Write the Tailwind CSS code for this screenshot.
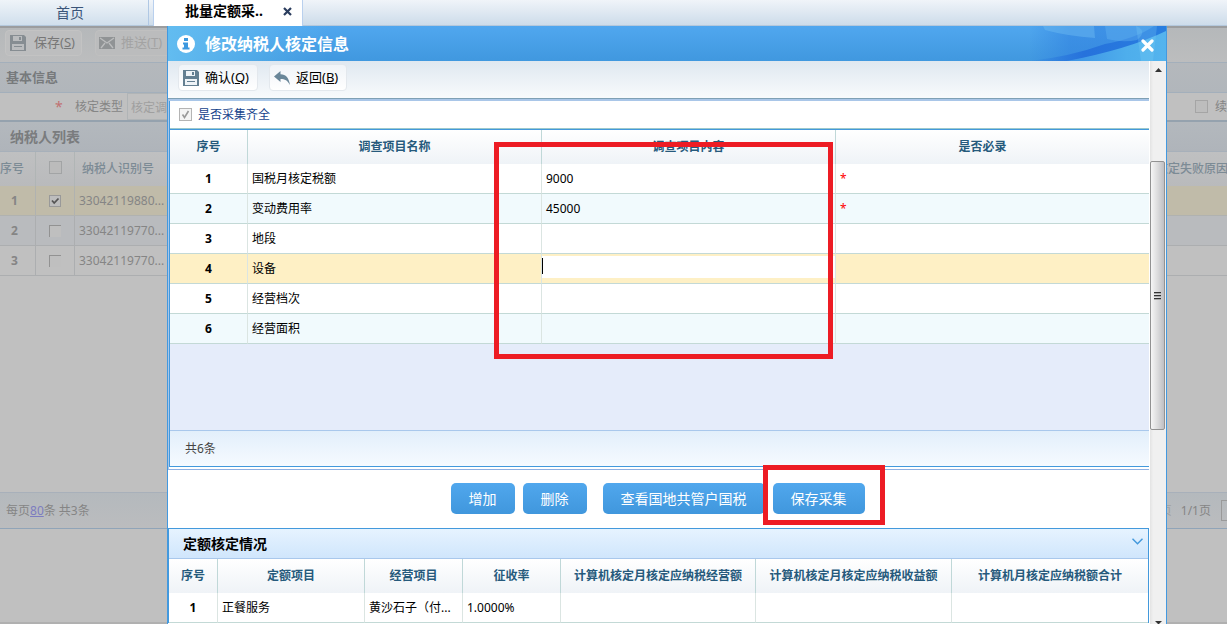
<!DOCTYPE html>
<html lang="zh-CN">
<head>
<meta charset="utf-8">
<title>批量定额采集</title>
<script src="https://cdn.jsdelivr.net/npm/@tailwindcss/browser@4"></script>
</head>
<body class="relative flex h-screen flex-col overflow-hidden bg-[#c0c0c0] font-['Noto_Sans','Noto_Sans_CJK_SC',sans-serif] text-xs text-black">

<!-- Tabs -->
<nav class="flex h-[26px] shrink-0 gap-1 border-b border-[#b4c8dc] bg-linear-to-b from-[#f0f4f9] to-[#cddcea]">
  <a href="#" class="flex w-[149px] items-center justify-center border-r border-[#b0c8e4] bg-linear-to-b from-[#eff4f9] to-[#d0dfec] pr-2 text-sm text-[#3a5478]">首页</a>
  <div class="flex h-[26px] w-[150px] items-center border-x border-[#b9d0ee] bg-white pb-1 pl-[31px]">
    <a href="#" class="w-[94px] text-sm font-bold">批量定额采..</a>
    <button aria-label="关闭" class="flex size-4 items-center justify-center">
      <svg class="size-[9px]" viewBox="0 0 9 9"><path d="M1 1l7 7M8 1L1 8" stroke="#2b3d5e" stroke-width="2.2"/></svg>
    </button>
  </div>
</nav>

<!-- Dimmed page -->
<main class="flex min-h-0 flex-1 flex-col overflow-hidden whitespace-nowrap border-t-2 border-[#9b9d9f] text-[#858585]">
  <div class="flex h-[35px] shrink-0 items-center gap-[13px] border-b border-[#a3afbb] bg-linear-to-b from-[#b5b8ba] to-[#bcbdbe] px-[5px] pb-1">
    <button class="flex h-[26px] w-[77px] items-center gap-2 rounded-sm border border-[#c3c3c3] bg-[#bdbebf] px-1 text-[13px] text-[#777]">
      <svg class="size-4 shrink-0" viewBox="0 0 16 16"><path d="M0 0H14L16 2V16H0Z" fill="#868d92"/><path d="M3 1H12V6H3ZM2 9H14V15H2Z" fill="#babcbe"/><path d="M9 2h2v3H9zM4 11h8v1H4z" fill="#868d92"/></svg>
      <span>保存(<u>S</u>)</span>
    </button>
    <button class="flex h-[26px] w-[77px] items-center gap-[6px] rounded-sm border border-[#c0c0c0] bg-[#bbbcbd] px-[3px] text-[13px] text-[#a3a3a3]">
      <svg class="h-3 w-4 shrink-0" viewBox="0 0 16 12"><path d="M0 0H16V12H0Z" fill="#909395"/><path d="M1 1l7 5 7-5M2 11l4-5M14 11l-4-5" stroke="#bcbdbe" stroke-width="1.3" fill="none"/></svg>
      <span>推送(<u>T</u>)</span>
    </button>
  </div>
  <h2 class="h-[30px] shrink-0 border-b border-[#a3afbb] bg-linear-to-b from-[#b4b8bc] to-[#b1b6bb] px-[6px] text-[13px] leading-[29px] font-bold text-[#777a7c]">基本信息</h2>
  <div class="flex h-[29px] shrink-0 items-center border-b-2 border-[#95a2ae]">
    <span class="w-[75px] pl-[55px] text-sm text-[#c07070]">*</span>
    <label for="kind" class="w-[52px]">核定类型</label>
    <input id="kind" value="核定调整" class="h-[27px] w-[180px] border border-[#b0b4b6] px-[3px] text-[#9f9f9f]">
    <label class="ml-auto flex w-8 items-center gap-[7px] overflow-hidden"><input type="checkbox" class="size-[13px] shrink-0 appearance-none border border-[#a5a5a5] bg-[#bdbdbd]">续</label>
  </div>
  <h2 class="h-[30px] shrink-0 border-b border-[#a7b0ba] bg-linear-to-b from-[#b3b8bd] to-[#afb4ba] px-[10px] text-sm leading-[29px] font-bold text-[#7a7c7e]">纳税人列表</h2>
  <table class="w-full shrink-0 table-fixed border-separate border-spacing-0">
    <thead>
      <tr class="h-[34px] bg-linear-to-b from-[#bfc0c1] to-[#b9babc] text-left text-[#7c8b95]">
        <th class="w-9 border-r border-[#b0b5b5] font-medium">序号</th>
        <th class="w-[39px] border-r border-[#b0b5b5] pb-1"><input type="checkbox" aria-label="全选" class="mx-auto block size-[13px] appearance-none border border-[#a2a4a5] bg-[#bbb]"></th>
        <th class="pl-[7px] font-medium">纳税人识别号</th>
        <th class="w-[71px] font-medium">核定失败原因</th>
      </tr>
    </thead>
    <tbody>
      <tr class="h-[30px] bg-[#c0bba9]">
        <th class="border-r border-b border-[#b0b2b0] pl-[11px] text-left">1</th>
        <td class="border-r border-b border-[#b0b2b0]"><span class="mx-auto grid size-3"><input type="checkbox" checked aria-label="选择 1" class="col-start-1 row-start-1 size-3 appearance-none border border-[#999] bg-[#bdbdbd]"><svg class="pointer-events-none col-start-1 row-start-1 size-3" viewBox="0 0 12 12"><path d="M3 5.5l2.2 2.5L9.500 3.500" stroke="#555" stroke-width="1.8" fill="none"/></svg></span></td>
        <td class="border-b border-[#b0b2b0] pl-1">33042119880...</td><td class="border-b border-[#b0b2b0]"></td>
      </tr>
      <tr class="h-[30px] bg-[#b9bbbe]">
        <th class="border-r border-b border-[#acaeb0] pl-[11px] text-left">2</th>
        <td class="border-r border-b border-[#acaeb0]"><input type="checkbox" aria-label="选择 2" class="mx-auto block size-3 appearance-none border-t border-l border-[#929292] bg-[#bfbfbf]"></td>
        <td class="border-b border-[#acaeb0] pl-1">33042119770...</td><td class="border-b border-[#acaeb0]"></td>
      </tr>
      <tr class="h-[30px]">
        <th class="border-r border-b border-[#acaeb0] pl-[11px] text-left">3</th>
        <td class="border-r border-b border-[#acaeb0]"><input type="checkbox" aria-label="选择 3" class="mx-auto block size-3 appearance-none border-t border-l border-[#929292] bg-[#bfbfbf]"></td>
        <td class="border-b border-[#acaeb0] pl-1">33042119770...</td><td class="border-b border-[#acaeb0]"></td>
      </tr>
    </tbody>
  </table>
  <div class="flex-1"></div>
  <div class="mb-[94px] flex h-[37px] shrink-0 items-center border-t border-b border-t-[#a8b0ba] border-b-[#90a4b8] bg-linear-to-b from-[#b4b9bd] to-[#bbbcbe] pl-[6px]">
    <span>每页<a href="#" class="text-[#7c7cc0] underline">80</a>条&nbsp;共3条</span>
    <span class="ml-auto text-[#a0a0a0]">页</span><span class="mr-[10px] ml-[9px]">1/1页</span>
    <input aria-label="页码" class="h-[21px] w-[6px] border border-r-0 border-[#9a9a9a]">
  </div>
  <div class="-mt-px h-[2px] shrink-0 bg-[#b0b0b0]"></div>
</main>

<!-- Dialog -->
<section role="dialog" aria-labelledby="dlg" class="absolute top-[26px] right-[60px] bottom-0 left-[167px] flex flex-col overflow-hidden border-x border-[#4399e0] bg-white">
  <header class="relative flex h-[35px] shrink-0 items-center bg-linear-to-b from-[#50a7ef] to-[#4098df] pr-3 pl-[9px]">
    <div class="absolute inset-y-0 left-0 w-40 bg-linear-to-r from-[#62bcf0] to-transparent"></div>
    <svg class="absolute top-0 right-0 h-[35px] w-[137px]" viewBox="0 0 137 35">
      <defs>
        <linearGradient id="sw" x1="0" x2="1"><stop offset="0" stop-color="#2775dd" stop-opacity="0"/><stop offset=".4" stop-color="#2672dc"/><stop offset="1" stop-color="#287ee0"/></linearGradient>
        <linearGradient id="haze" x1="0" x2="1"><stop offset="0" stop-color="#2f80e0" stop-opacity="0"/><stop offset=".3" stop-color="#2f80e0" stop-opacity=".55"/><stop offset="1" stop-color="#2f80e0" stop-opacity=".55"/></linearGradient>
        <linearGradient id="cy" x1="0" x2="1"><stop offset="0" stop-color="#3c92e4"/><stop offset=".6" stop-color="#4eaeec"/><stop offset="1" stop-color="#54b4ee"/></linearGradient>
      </defs>
      <path d="M0 0H137V35H0Z" fill="url(#haze)"/>
      <path d="M0 35Q40 31 76 18Q108 12 125 0H137V6Q100 24 40 35Z" fill="url(#sw)"/>
      <path d="M38 35Q100 23 137 5V35Z" fill="url(#cy)"/>
      <path d="M14 0H65L66 12Q38 10 16 4Z" fill="#6ebdf2" fill-opacity=".45"/>
      <path d="M76 0h31q12 5 1 14-14 3-30-1z" fill="#64b4f0" fill-opacity=".4"/>
      <path d="M107 0h12l9 0-4 35h-12z" fill="#7fd4f7" fill-opacity=".25"/>
    </svg>
    <svg class="relative size-[18px]" viewBox="0 0 18 18"><circle cx="9" cy="9" r="9" fill="#fff"/><path d="M7 3h4v3H7zM6 7.500h5v5h1.500v2h-7v-2H7v-3H6z" fill="#3c98df"/></svg>
    <h1 id="dlg" class="relative ml-[10px] text-base font-bold text-white">修改纳税人核定信息</h1>
    <button aria-label="关闭" class="relative mt-1 ml-auto flex items-center">
      <svg class="size-[13px]" viewBox="0 0 13 13"><path d="M2 2l9 9M11 2l-9 9" stroke="#fff" stroke-width="3.200" stroke-linecap="round"/></svg>
    </button>
  </header>

  <div class="flex min-h-0 flex-1">
    <div class="min-w-0 flex-1">
      <div class="flex h-[38px] items-center gap-[11px] border-b border-[#7fa0b4] bg-linear-to-b from-[#dfe8f0] to-[#f8fafc] px-[10px] pb-1">
        <button class="flex h-[27px] w-[80px] items-center gap-[6px] rounded border border-[#e3e8ed] bg-linear-to-b from-[#f0f4f8] to-white px-1 text-[13px]">
          <svg class="size-4 shrink-0" viewBox="0 0 16 16"><path d="M0 0H14L16 2V16H0Z" fill="#637f91"/><path d="M3 1H12V6H3ZM2 9H14V15H2Z" fill="#eef3f7"/><path d="M9 2h2v3H9zM4 11h8v1H4z" fill="#637f91"/></svg>
          <span>确认(<u>Q</u>)</span>
        </button>
        <button class="flex h-[27px] w-[78px] items-center gap-[6px] rounded border border-[#e3e8ed] bg-linear-to-b from-[#f0f4f8] to-white px-1 text-[13px]">
          <svg class="h-[14px] w-4 shrink-0" viewBox="0 0 16 14"><path d="M0 5.500L6.500 0V3.200C12 3.200 15 7 16 14C13.500 9.500 11 8 6.500 8V11Z" fill="#6a8799"/></svg>
          <span>返回(<u>B</u>)</span>
        </button>
      </div>

      <div class="relative border-t-2 border-b border-l border-[#a9c6e8] border-b-[#8fb0e2] pb-[2px]">
        <div class="border-l border-[#4399dc]">
          <label class="flex h-7 items-center gap-[6px] border-b border-[#9cc8cc] pl-[9px] text-[#15428b]">
            <span class="grid size-[13px]"><input type="checkbox" checked disabled class="col-start-1 row-start-1 size-[13px] appearance-none border border-[#b4b4b4] bg-[#f4f4f4]"><svg class="col-start-1 row-start-1 size-[13px]" viewBox="0 0 13 13"><path d="M3.500 6.500l2 3L9.500 3" stroke="#999" stroke-width="1.600" fill="none"/></svg></span>
            是否采集齐全
          </label>
          <table class="w-full table-fixed border-separate border-spacing-0 border-t border-[#4399dc]">
            <thead>
              <tr class="h-[34px] bg-linear-to-b from-white to-[#eff3f7] text-[#265a7c]">
                <th class="w-[78px] border-r border-[#c0d8d8]">序号</th>
                <th class="w-[294px] border-r border-[#c0d8d8]">调查项目名称</th>
                <th class="w-[294px] border-r border-[#c0d8d8]">调查项目内容</th>
                <th class="pr-5">是否必录</th>
              </tr>
            </thead>
            <tbody class="[&_td]:border-b [&_td]:border-[#c3d9d6] [&_td]:px-1 [&_td:not(:last-child)]:border-r [&_td:not(:last-child)]:border-r-[#dbe5e2] [&_th]:border-r [&_th]:border-b [&_th]:border-[#c3d9d6] [&_th]:border-r-[#dbe5e2]">
              <tr class="h-[30px]"><th>1</th><td>国税月核定税额</td><td>9000</td><td class="text-[#f00]">*</td></tr>
              <tr class="h-[30px] bg-[#f1fafd]"><th>2</th><td>变动费用率</td><td>45000</td><td class="text-[#f00]">*</td></tr>
              <tr class="h-[30px]"><th>3</th><td>地段</td><td></td><td></td></tr>
              <tr class="h-[30px] bg-[#fef0c5]"><th>4</th><td>设备</td>
                <td><div class="relative -mx-1 mb-1 h-[22px]"><input aria-label="设备" class="block h-full w-full bg-white px-1 outline-none"><span class="absolute top-[2px] left-0 h-4 w-px bg-black"></span></div></td><td></td></tr>
              <tr class="h-[30px]"><th>5</th><td>经营档次</td><td></td><td></td></tr>
              <tr class="h-[30px] bg-[#f1fafd]"><th>6</th><td>经营面积</td><td></td><td></td></tr>
            </tbody>
          </table>
          <div class="h-[86px] bg-[#e5ecfa]"></div>
          <div class="h-[37px] border-t border-b border-t-[#a9c8ec] border-b-[#4399dc] bg-linear-to-b from-[#e2effb] to-[#f6faff] pl-[15px] leading-[35px] text-[#444]">共6条</div>
        </div>
        <!-- Highlight over the content column -->
        <div class="pointer-events-none absolute top-[41px] left-[325px] h-[217px] w-[339px] border-[5px] border-[#ed1c24]"></div>
      </div>

      <div class="flex h-[58px] items-center justify-center pr-[2px] pb-px text-sm text-white">
        <button class="h-[31px] rounded-[5px] bg-linear-to-b from-[#50a7ed] to-[#4097dd] px-[18px]">增加</button>
        <button class="ml-2 h-[31px] rounded-[5px] bg-linear-to-b from-[#50a7ed] to-[#4097dd] px-[18px]">删除</button>
        <button class="ml-4 h-[31px] rounded-[5px] bg-linear-to-b from-[#50a7ed] to-[#4097dd] px-[18px]">查看国地共管户国税</button>
        <div class="relative ml-2">
          <button class="h-[31px] rounded-[5px] bg-linear-to-b from-[#50a7ed] to-[#4097dd] px-[18px]">保存采集</button>
          <div class="pointer-events-none absolute -top-[18px] -right-5 -bottom-[11px] -left-[10px] border-[5px] border-[#ed1c24]"></div>
        </div>
      </div>

      <div class="border-t border-r border-l border-[#4399dc]">
        <div class="flex h-[30px] items-center justify-between border-b border-[#a9c8ec] bg-linear-to-b from-[#e6f3ff] to-[#d0e6fc] pr-[5px] pl-[14px]">
          <h2 class="text-sm font-bold">定额核定情况</h2>
          <button aria-label="收起" class="mb-1"><svg class="h-[7px] w-[11px]" viewBox="0 0 11 7"><path d="M.5.8l5 5 5-5" stroke="#4399dc" stroke-width="1.500" fill="none"/></svg></button>
        </div>
        <table class="w-full table-fixed border-separate border-spacing-0">
          <thead>
            <tr class="h-[34px] bg-linear-to-b from-white to-[#eff3f7] text-[#265a7c] [&>th:not(:last-child)]:border-r [&>th:not(:last-child)]:border-[#c0d8d8]">
              <th class="w-[49px]">序号</th><th class="w-[147px]">定额项目</th><th class="w-[98px]">经营项目</th><th class="w-[98px]">征收率</th>
              <th class="w-[195px]">计算机核定月核定应纳税经营额</th><th class="w-[196px]">计算机核定月核定应纳税收益额</th><th>计算机月核定应纳税额合计</th>
            </tr>
          </thead>
          <tbody>
            <tr class="h-[30px] [&>*]:border-b [&>*]:border-[#c3d9d6] [&>*:not(:last-child)]:border-r [&>*:not(:last-child)]:border-r-[#dbe5e2] [&>td]:px-1">
              <th>1</th><td>正餐服务</td><td class="whitespace-nowrap">黄沙石子（付...</td><td>1.0000%</td><td></td><td></td><td></td>
            </tr>
          </tbody>
        </table>
      </div>
    </div>

    <!-- Vertical scrollbar -->
    <div aria-hidden="true" class="ml-px flex w-4 shrink-0 flex-col items-center bg-linear-to-r from-[#e3e3e3] to-[#f0f0f0] to-20%">
      <svg class="mt-[7px] h-1 w-[7px]" viewBox="0 0 7 4"><path d="M3.500 0L7 4H0z" fill="#333"/></svg>
      <div class="mt-[89px] flex h-[269px] w-[15px] flex-col items-center justify-center gap-px self-start rounded-xs border border-[#929292] bg-linear-to-r from-[#f6f6f6] via-[#dcdcdd] to-[#bfbfc3]">
        <span class="h-[2px] w-[7px] border-t border-[#333] bg-[#aaa]"></span>
        <span class="h-[2px] w-[7px] border-t border-[#333] bg-[#aaa]"></span>
        <span class="h-[2px] w-[7px] border-t border-[#333] bg-[#aaa]"></span>
      </div>
      <svg class="mt-auto h-[3px] w-[7px]" viewBox="0 0 7 3"><path d="M0 0H7L4 3H3z" fill="#333"/></svg>
    </div>
  </div>
</section>
</body>
</html>
